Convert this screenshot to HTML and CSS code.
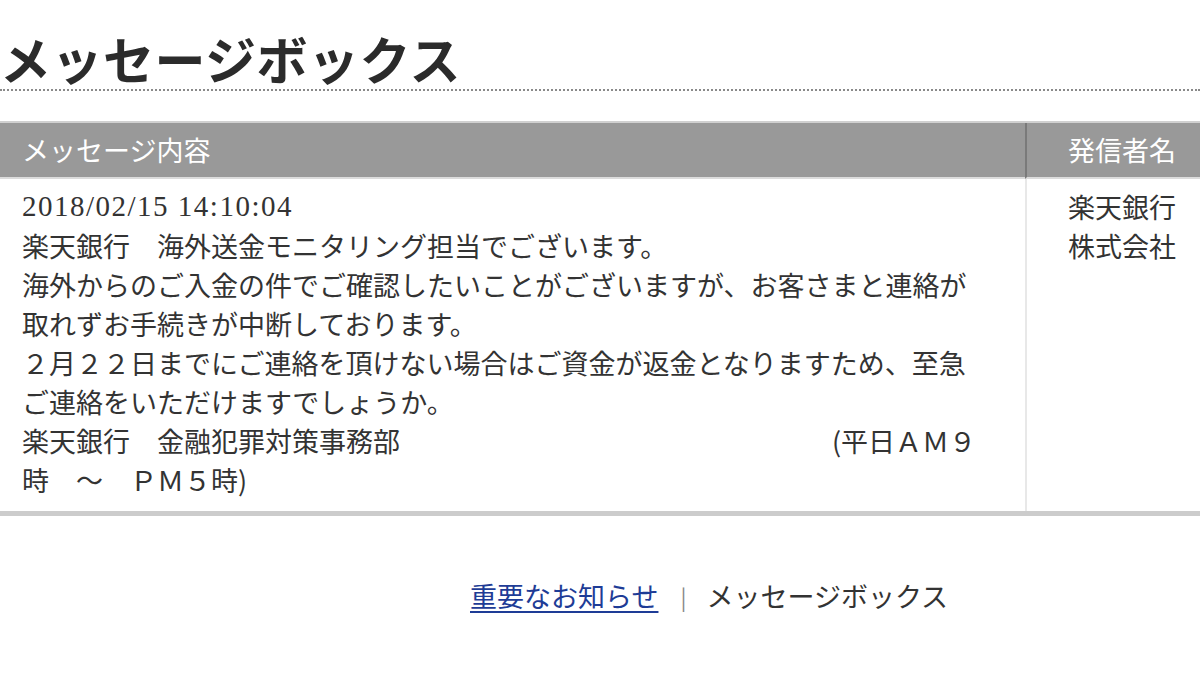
FILE: index.html
```html
<!DOCTYPE html>
<html lang="ja">
<head>
<meta charset="utf-8">
<title>メッセージボックス</title>
<link rel="stylesheet" href="styles.css">
</head>
<body>
<h1 class="title">メッセージボックス</h1>
<div class="msg-table">
  <div class="th th-content">メッセージ内容</div>
  <div class="th th-sender">発信者名</div>
  <div class="td td-content">
    <div class="date">2018/02/15 14:10:04</div>
    <div class="text">楽天銀行　海外送金モニタリング担当でございます。<br>海外からのご入金の件でご確認したいことがございますが、お客さまと連絡が取れずお手続きが中断しております。<br>２月２２日までにご連絡を頂けない場合はご資金が返金となりますため、至急ご連絡をいただけますでしょうか。<br>楽天銀行　金融犯罪対策事務部　　　　　　　　　　　　　　　　(平日ＡＭ９<br>時　～　ＰＭ５時)</div>
  </div>
  <div class="td td-sender">楽天銀行株式会社</div>
</div>
<div class="footer">
  <a class="footer-link" href="#">重要なお知らせ</a>
  <span class="sep">|</span>
  <span class="current">メッセージボックス</span>
</div>
</body>
</html>
```

FILE: styles.css
```css
html, body {
  margin: 0;
  padding: 0;
  background: #ffffff;
}
body {
  font-family: "Liberation Serif", "Noto Sans CJK JP", serif;
  color: #333333;
  width: 1200px;
}
.title {
  margin: 0;
  padding: 28px 0 1px 0;
  font-family: "Noto Sans CJK JP", sans-serif;
  font-size: 51px;
  line-height: 60px;
  font-weight: 700;
  letter-spacing: 0.5px;
  color: #2b2b2b;
  border-bottom: 2px dotted #8a8a8a;
}
.msg-table {
  margin-top: 30px;
  display: grid;
  grid-template-columns: 1025px 1fr;
  border-top: 2px solid #d0d0d0;
  border-bottom: 5px solid #cccccc;
}
.th {
  background: #999999;
  color: #ffffff;
  height: 54px;
  line-height: 54px;
  font-family: "Noto Sans CJK JP", sans-serif;
  font-size: 27px;
  border-bottom: 2px solid #dcdcdc;
}
.th-content {
  padding-left: 22px;
}
.th-sender {
  text-align: right;
  padding-right: 24px;
  border-left: 2px solid #7a7a7a;
}
.td {
  font-family: "Liberation Serif", "Noto Sans CJK JP", serif;
  font-size: 27px;
  line-height: 39px;
  color: #333333;
  padding-top: 8px;
  padding-bottom: 12px;
}
.td-content {
  padding-left: 22px;
  padding-right: 40px;
}
.date {
  font-size: 29px;
  letter-spacing: 1.5px;
}
.text {
  font-family: "Noto Sans CJK JP", sans-serif;
}
.td-sender {
  font-family: "Noto Sans CJK JP", sans-serif;
  border-left: 2px solid #e8e8e8;
  text-align: right;
  padding-right: 24px;
  padding-left: 38px;
}
.footer {
  margin-top: 60px;
  padding-left: 470px;
  display: flex;
  align-items: center;
  font-family: "Noto Sans CJK JP", sans-serif;
  font-size: 27px;
  line-height: 40px;
}
.footer-link {
  color: #1e3c96;
  text-decoration: underline;
  text-underline-offset: 4px;
  text-decoration-thickness: 2px;
}
.sep {
  color: #888888;
  font-size: 22px;
  margin: 0 20px 0 22px;
}
.current {
  color: #333333;
}
```
